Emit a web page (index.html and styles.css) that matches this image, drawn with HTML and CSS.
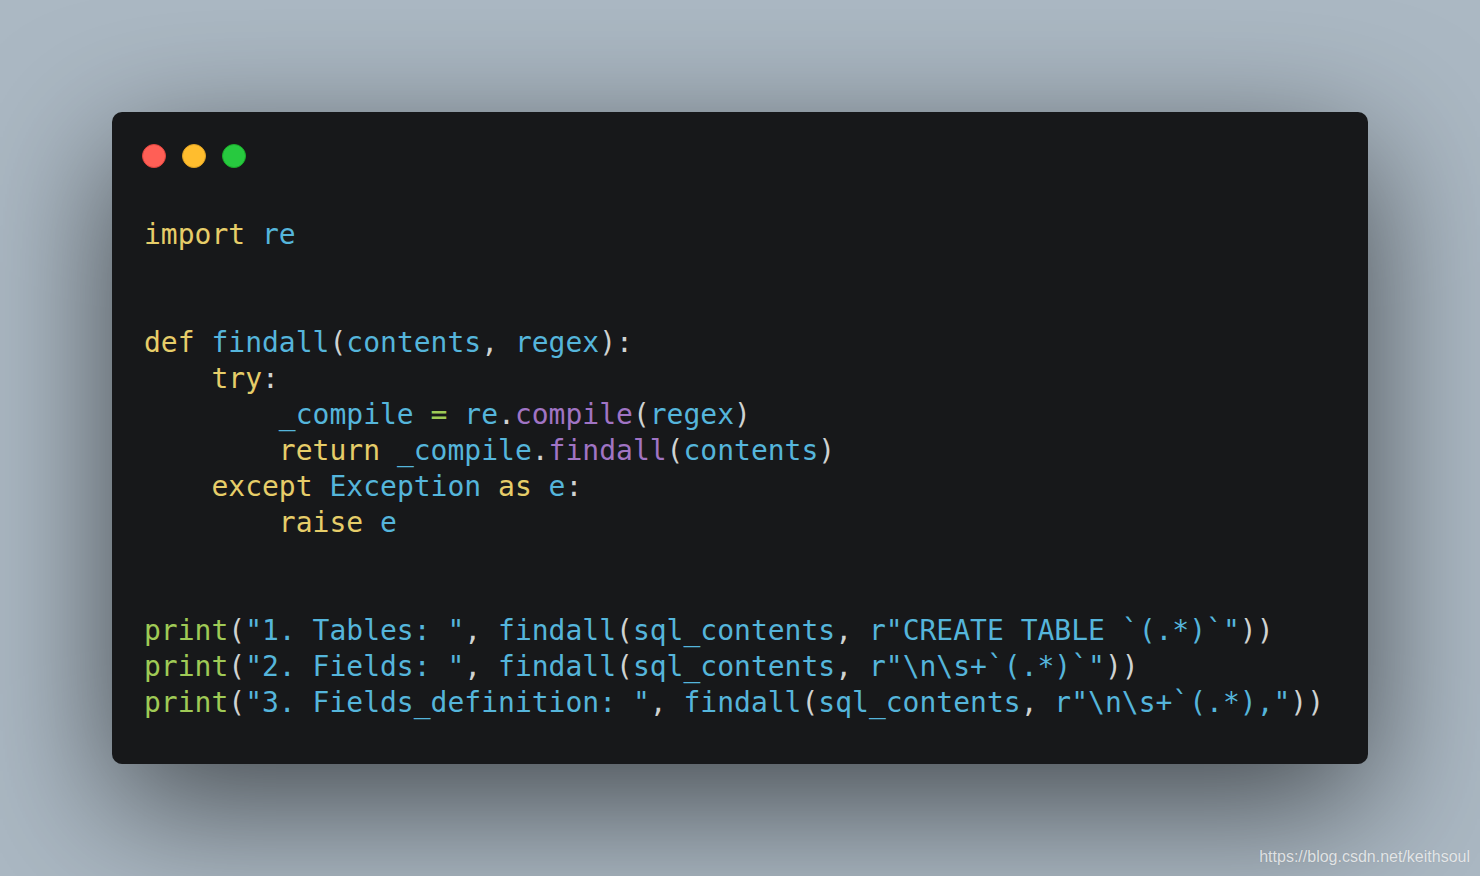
FILE: index.html
```html
<!DOCTYPE html>
<html lang="en">
<head>
<meta charset="utf-8">
<title>Code</title>
<link rel="stylesheet" href="styles.css">
</head>
<body>
<div class="stage">
  <div class="window">
    <div class="controls">
      <span class="dot red"></span>
      <span class="dot yellow"></span>
      <span class="dot green"></span>
    </div>
<pre class="code"><span class="k">import</span> <span class="v">re</span>


<span class="k">def</span> <span class="v">findall</span><span class="p">(</span><span class="v">contents</span><span class="p">,</span> <span class="v">regex</span><span class="p">):</span>
    <span class="k">try</span><span class="p">:</span>
        <span class="v">_compile</span> <span class="o">=</span> <span class="v">re</span><span class="p">.</span><span class="m">compile</span><span class="p">(</span><span class="v">regex</span><span class="p">)</span>
        <span class="k">return</span> <span class="v">_compile</span><span class="p">.</span><span class="m">findall</span><span class="p">(</span><span class="v">contents</span><span class="p">)</span>
    <span class="k">except</span> <span class="v">Exception</span> <span class="k">as</span> <span class="v">e</span><span class="p">:</span>
        <span class="k">raise</span> <span class="v">e</span>


<span class="o">print</span><span class="p">(</span><span class="v">"1. Tables: "</span><span class="p">,</span> <span class="v">findall</span><span class="p">(</span><span class="v">sql_contents</span><span class="p">,</span> <span class="v">r"CREATE TABLE `(.*)`"</span><span class="p">))</span>
<span class="o">print</span><span class="p">(</span><span class="v">"2. Fields: "</span><span class="p">,</span> <span class="v">findall</span><span class="p">(</span><span class="v">sql_contents</span><span class="p">,</span> <span class="v">r"\n\s+`(.*)`"</span><span class="p">))</span>
<span class="o">print</span><span class="p">(</span><span class="v">"3. Fields_definition: "</span><span class="p">,</span> <span class="v">findall</span><span class="p">(</span><span class="v">sql_contents</span><span class="p">,</span> <span class="v">r"\n\s+`(.*),"</span><span class="p">))</span></pre>
  </div>
</div>
<div class="watermark">https://blog.csdn.net/keithsoul</div>
</body>
</html>
```

FILE: styles.css
```css
html, body {
  margin: 0;
  padding: 0;
  width: 1480px;
  height: 876px;
  overflow: hidden;
  background: #abb8c3;
}

.stage {
  padding: 112px;
  display: flex;
}

.window {
  width: 1256px;
  height: 652px;
  box-sizing: border-box;
  background: #17181a;
  border-radius: 10px;
  box-shadow: 0 40px 136px rgba(0, 0, 0, 0.6);
  padding: 32px 30px 0 30px;
}

.controls {
  display: flex;
  gap: 16px;
  height: 24px;
}

.dot {
  width: 24px;
  height: 24px;
  border-radius: 50%;
  box-sizing: border-box;
}

.red { background: #ff5f56; border: 1px solid #e0443e; }
.yellow { background: #ffbd2e; border: 1px solid #dea123; }
.green { background: #27c93f; border: 1px solid #1aab29; }

.code {
  margin: 49px 0 0 2px;
  font-family: "DejaVu Sans Mono", "Liberation Mono", monospace;
  font-size: 28px;
  line-height: 36px;
  color: #cfd2d1;
  white-space: pre;
}

.k { color: #e6cd69; }
.v { color: #55b5db; }
.m { color: #a074c4; }
.o { color: #9fca56; }
.p { color: #cfd2d1; }

.watermark {
  position: absolute;
  right: 10px;
  bottom: 10px;
  font-family: "Liberation Sans", Arial, sans-serif;
  font-size: 16px;
  color: rgba(255, 255, 255, 0.75);
  text-shadow: 0 0 1px rgba(0, 0, 0, 0.15);
}
```
